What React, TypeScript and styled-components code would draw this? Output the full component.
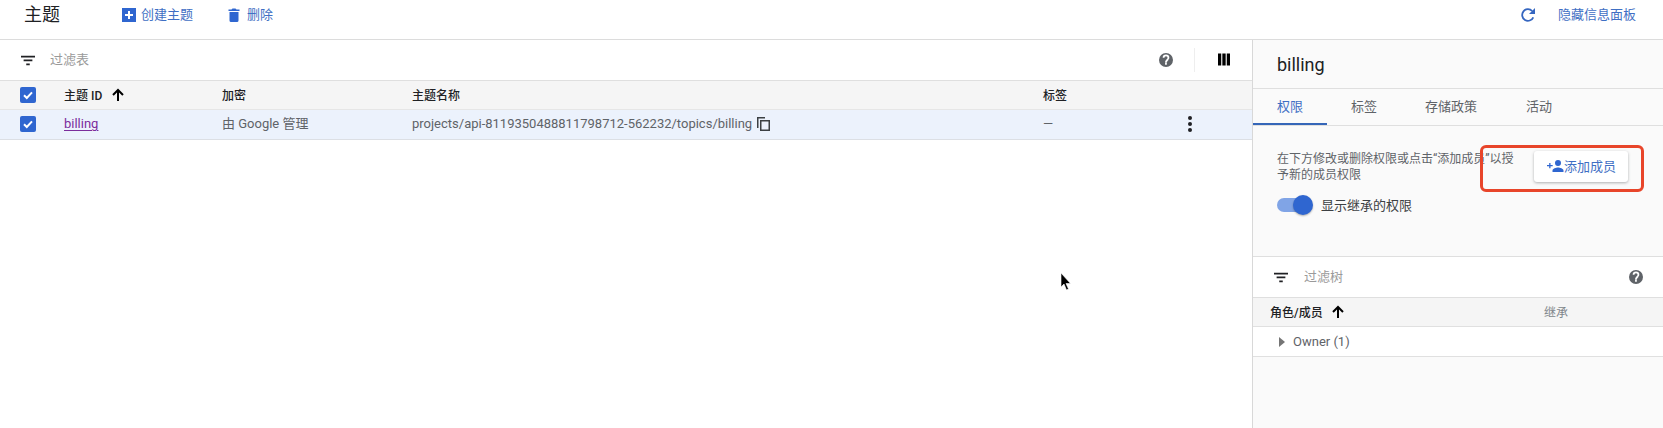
import React from "react";
import styled, { createGlobalStyle } from "styled-components";

const Global = createGlobalStyle`
  html, body { margin: 0; padding: 0; background: #fff; }
  body { font-family: Roboto, "Noto Sans CJK SC", sans-serif; color: #202124; }
  * { box-sizing: border-box; }
`;

const Page = styled.div`
  width: 1663px; height: 428px; overflow: hidden; position: relative;
  display: flex; flex-direction: column; background: #fff;
`;
const TopBar = styled.header`
  height: 40px; flex: none; display: flex; align-items: center;
  padding: 0 27px 9px 24px; border-bottom: 1px solid #dcdcdc;
`;
const PageTitle = styled.h1`
  margin: 0; width: 98px; font-size: 18px; font-weight: 400; line-height: 24px; color: #202124;
`;
const ActionLink = styled.a<{ $gap: number; $mr?: number }>`
  display: inline-flex; align-items: center; gap: ${(p) => p.$gap}px;
  margin-right: ${(p) => p.$mr ?? 0}px;
  font-size: 13px; color: #3f6fc4; line-height: 18px;
`;
const Spacer = styled.div`flex: 1;`;
const Body = styled.div`flex: 1; display: flex; min-height: 0;`;
const LeftPane = styled.main`width: 1252px; flex: none; background: #fff;`;
const RightPane = styled.aside`
  flex: 1; background: #fafafa; border-left: 1px solid #d8d8d8; display: flex; flex-direction: column;
`;
const FilterRow = styled.div<{ $pl: number; $pr: number }>`
  height: 41px; flex: none; display: flex; align-items: center; background: #fff;
  padding: 0 ${(p) => p.$pr}px 1px ${(p) => p.$pl}px; border-bottom: 1px solid #dfdfdf;
`;
const FilterText = styled.span<{ $ml: number }>`
  margin: 0 0 2px ${(p) => p.$ml}px; font-size: 13px; color: #9a9a9a;
`;
const VDivider = styled.div`width: 1px; height: 24px; background: #eeeeee; margin: 0 23px 0 21px;`;
const Row = styled.div<{ $head?: boolean; $h: number }>`
  height: ${(p) => p.$h}px; display: flex; align-items: center; padding-bottom: ${(p) => (p.$head ? 0 : 2)}px;
  background: ${(p) => (p.$head ? "#f5f5f5" : "#ecf2fc")};
  border-bottom: 1px solid ${(p) => (p.$head ? "#e6e6e6" : "#dcdfe4")};
`;
const Cell = styled.div<{ $w: number; $pl?: number }>`
  width: ${(p) => p.$w}px; flex: none; padding-left: ${(p) => p.$pl ?? 0}px;
  display: flex; align-items: center; font-size: 13px;
`;
const HeadText = styled.span`font-size: 12px; font-weight: 500; color: #202124; margin-bottom: 2px;`;
const CellText = styled.span`font-size: 13px; line-height: 16px; color: #5f6368;`;
const VisitedLink = styled.a`
  font-size: 13px; color: #7b2d9c; text-decoration: underline; text-underline-offset: 2px;
`;
const Check = styled.span`
  width: 16px; height: 16px; border-radius: 2px; background: #2f66d0;
  display: inline-flex; align-items: center; justify-content: center;
`;
const PanelTitle = styled.div`
  height: 49px; flex: none; padding: 0 0 0 24px; display: flex; align-items: center;
  border-bottom: 1px solid #dfdfdf; font-size: 18px; color: #202124;
`;
const Tabs = styled.nav`
  height: 37px; flex: none; display: flex; border-bottom: 1px solid #dfdfdf;
`;
const Tab = styled.div<{ $w: number; $active?: boolean }>`
  width: ${(p) => p.$w}px; padding-left: 24px; height: 36px; line-height: 36px; font-size: 13px;
  color: ${(p) => (p.$active ? "#3f6fc4" : "#5f6368")};
  border-bottom: ${(p) => (p.$active ? "2px solid #3566b8" : "none")};
`;
const Intro = styled.section`
  height: 131px; flex: none; padding: 25px 15px 0 24px; border-bottom: 1px solid #dfdfdf;
`;
const IntroTop = styled.div`display: flex; align-items: flex-start;`;
const IntroText = styled.p`
  margin: 0; width: 240px; font-size: 12px; line-height: 16px; color: #5f6368;
`;
const AddButton = styled.button`
  width: 94px; height: 31px; margin: 0 0 0 17px; padding: 0 0 2px 1px; border: 0; border-radius: 3px;
  background: #fff; box-shadow: 0 1px 3px rgba(60, 64, 67, 0.4);
  display: inline-flex; align-items: center; justify-content: center;
  font: 13px Roboto, "Noto Sans CJK SC", sans-serif; color: #3f6fc4;
`;
const ToggleRow = styled.div`
  margin-top: 12px; display: flex; align-items: center; font-size: 13px; color: #3c4043;
`;
const ToggleTrack = styled.span`
  position: relative; display: inline-block; width: 34px; height: 14px; border-radius: 7px;
  background: #80a4e6; margin-right: 10px;
`;
const ToggleKnob = styled.span`
  position: absolute; right: -2px; top: -3px; width: 20px; height: 20px; border-radius: 50%;
  background: #2f66d0; box-shadow: 0 1px 2px rgba(0, 0, 0, 0.3);
`;
const TreeHead = styled.div`
  height: 29px; flex: none; display: flex; align-items: center; background: #f5f5f5;
  border-bottom: 1px solid #e0e0e0; padding-left: 17px;
`;
const TreeRow = styled.div`
  height: 30px; flex: none; display: flex; align-items: center; background: #fff;
  border-bottom: 1px solid #e0e0e0; padding-left: 26px; font-size: 13px; color: #5f6368;
`;
const InheritHead = styled.span`font-size: 12px; color: #80868b; margin-bottom: 2px;`;
const RoleCol = styled.div`width: 274px; display: flex; align-items: center;`;
const ArrowGap = styled.span<{ $w: number }>`width: ${(p) => p.$w}px;`;
const Highlight = styled.div`
  position: absolute; left: 1480px; top: 145px; width: 164px; height: 47px;
  border: 3px solid #e8452a; border-radius: 6px; pointer-events: none;
`;
const Cursor = styled.svg`position: absolute; left: 1060px; top: 273px;`;

const FilterIcon = () => (
  <svg width="14" height="12" viewBox="0 0 16 12"><path d="M0 1h16v2H0zM3 5.500h10v2H3zM6 10h4v2H6z" fill="#202124" /></svg>
);
const HelpIcon = () => (
  <svg width="14" height="14" viewBox="0 0 24 24"><path fill="#5f6368" d="M12 0a12 12 0 1 0 0 24 12 12 0 0 0 0-24zm1.400 20h-3v-3h3v3zm2.900-8.200-1.300 1.300c-1 1-1.600 1.900-1.600 3.400h-3v-.7c0-1.600.6-2.900 1.600-3.900l1.900-1.900c.5-.5.8-1.100.8-1.900a2.700 2.700 0 0 0-5.400 0h-3a5.700 5.700 0 0 1 11.400 0c0 1.100-.5 2-1.400 2.700z" /></svg>
);
const UpArrow = ({ s }: { s: number }) => (
  <svg width={s} height={s} viewBox="0 0 14 14"><path d="M7 13V2M2 7l5-5 5 5" fill="none" stroke="#000" strokeWidth="2" /></svg>
);
const CheckBox = () => (
  <Check><svg width="12" height="12" viewBox="0 0 12 12"><path d="M2 6.200l2.800 2.800L10 3.400" fill="none" stroke="#fff" strokeWidth="2" /></svg></Check>
);

export default function App() {
  return (
    <Page>
      <Global />
      <TopBar>
        <PageTitle>主题</PageTitle>
        <ActionLink $gap={5} $mr={35}>
          <svg width="14" height="14" viewBox="0 0 14 14"><path fillRule="evenodd" fill="#2f66d0" d="M0 0h14v14H0zM6 3v3H3v2h3v3h2V8h3V6H8V3z" /></svg>
          创建主题
        </ActionLink>
        <ActionLink $gap={7}>
          <svg width="12" height="14" viewBox="0 0 11 14"><path fill="#2f66d0" d="M1 4h9v8.500A1.500 1.500 0 0 1 8.500 14h-6A1.500 1.500 0 0 1 1 12.500zM0 1.500h3L4 .5h3l1 1h3V3H0z" /></svg>
          删除
        </ActionLink>
        <Spacer />
        <ActionLink $gap={0} $mr={22}>
          <svg width="16" height="16" viewBox="0 0 16 16"><path fill="none" stroke="#3566c0" strokeWidth="1.800" d="M13.300 10.300A5.800 5.800 0 1 1 12.200 4" /><path fill="#3566c0" d="M15 1v6H9z" /></svg>
        </ActionLink>
        <ActionLink $gap={0}>隐藏信息面板</ActionLink>
      </TopBar>
      <Body>
        <LeftPane>
          <FilterRow $pl={21} $pr={22}>
            <FilterIcon />
            <FilterText $ml={15}>过滤表</FilterText>
            <Spacer />
            <HelpIcon />
            <VDivider />
            <svg width="12" height="13" viewBox="0 0 13 13"><path d="M0 0h3.500v13H0zM4.700 0h3.600v13H4.700zM9.500 0H13v13H9.500z" fill="#000" /></svg>
          </FilterRow>
          <Row $head $h={29}>
            <Cell $w={64} $pl={20}><CheckBox /></Cell>
            <Cell $w={158}><HeadText>主题 ID</HeadText><ArrowGap $w={9} /><UpArrow s={14} /></Cell>
            <Cell $w={190}><HeadText>加密</HeadText></Cell>
            <Cell $w={631}><HeadText>主题名称</HeadText></Cell>
            <Cell $w={100}><HeadText>标签</HeadText></Cell>
          </Row>
          <Row $h={30}>
            <Cell $w={64} $pl={20}><CheckBox /></Cell>
            <Cell $w={158}><VisitedLink>billing</VisitedLink></Cell>
            <Cell $w={190}><CellText>由 Google 管理</CellText></Cell>
            <Cell $w={631}>
              <CellText>projects/api-8119350488811798712-562232/topics/billing</CellText>
              <svg style={{ marginLeft: 5 }} width="13" height="14" viewBox="0 0 13 14"><path fill="#3c4043" d="M0 0h8v1.500H1.500V11H0zM3 3h10v11H3zm1.500 1.500v8h7v-8z" fillRule="evenodd" /></svg>
            </Cell>
            <Cell $w={144}><CellText>—</CellText></Cell>
            <Cell $w={10}>
              <svg width="6" height="16" viewBox="0 0 6 16"><circle cx="3" cy="2" r="2" fill="#202124" /><circle cx="3" cy="8" r="2" fill="#202124" /><circle cx="3" cy="14" r="2" fill="#202124" /></svg>
            </Cell>
          </Row>
        </LeftPane>
        <RightPane>
          <PanelTitle>billing</PanelTitle>
          <Tabs>
            <Tab $w={74} $active>权限</Tab>
            <Tab $w={74}>标签</Tab>
            <Tab $w={101}>存储政策</Tab>
            <Tab $w={80}>活动</Tab>
          </Tabs>
          <Intro>
            <IntroTop>
              <IntroText>在下方修改或删除权限或点击“添加成员”以授予新的成员权限</IntroText>
              <AddButton>
                <svg width="17" height="12" viewBox="0 0 17 12"><path fill="#2f66d0" d="M0 5h2.200V3h1.300v2h2.200v1.300H3.500v2H2.200v-2H0zM11 0a3 3 0 1 1 0 6 3 3 0 0 1 0-6zM5.500 12v-1.500c0-2 3.700-3 5.500-3s5.500 1 5.500 3V12z" /></svg>
                添加成员
              </AddButton>
            </IntroTop>
            <ToggleRow>
              <ToggleTrack><ToggleKnob /></ToggleTrack>
              显示继承的权限
            </ToggleRow>
          </Intro>
          <FilterRow $pl={21} $pr={20}>
            <FilterIcon />
            <FilterText $ml={16}>过滤树</FilterText>
            <Spacer />
            <HelpIcon />
          </FilterRow>
          <TreeHead>
            <RoleCol>
              <HeadText>角色/成员</HeadText>
              <ArrowGap $w={8} />
              <UpArrow s={14} />
            </RoleCol>
            <InheritHead>继承</InheritHead>
          </TreeHead>
          <TreeRow>
            <svg width="7" height="10" viewBox="0 0 7 10" style={{ marginRight: 7 }}><path d="M0 0l6 5-6 5z" fill="#757575" /></svg>
            Owner (1)
          </TreeRow>
        </RightPane>
      </Body>
      <Highlight />
      <Cursor width="12" height="18" viewBox="0 0 12 18">
        <path d="M1 0v14l3-3 2.500 6 2-1-2.500-5.500h4.500z" fill="#000" stroke="#fff" strokeWidth="0.600" />
      </Cursor>
    </Page>
  );
}
